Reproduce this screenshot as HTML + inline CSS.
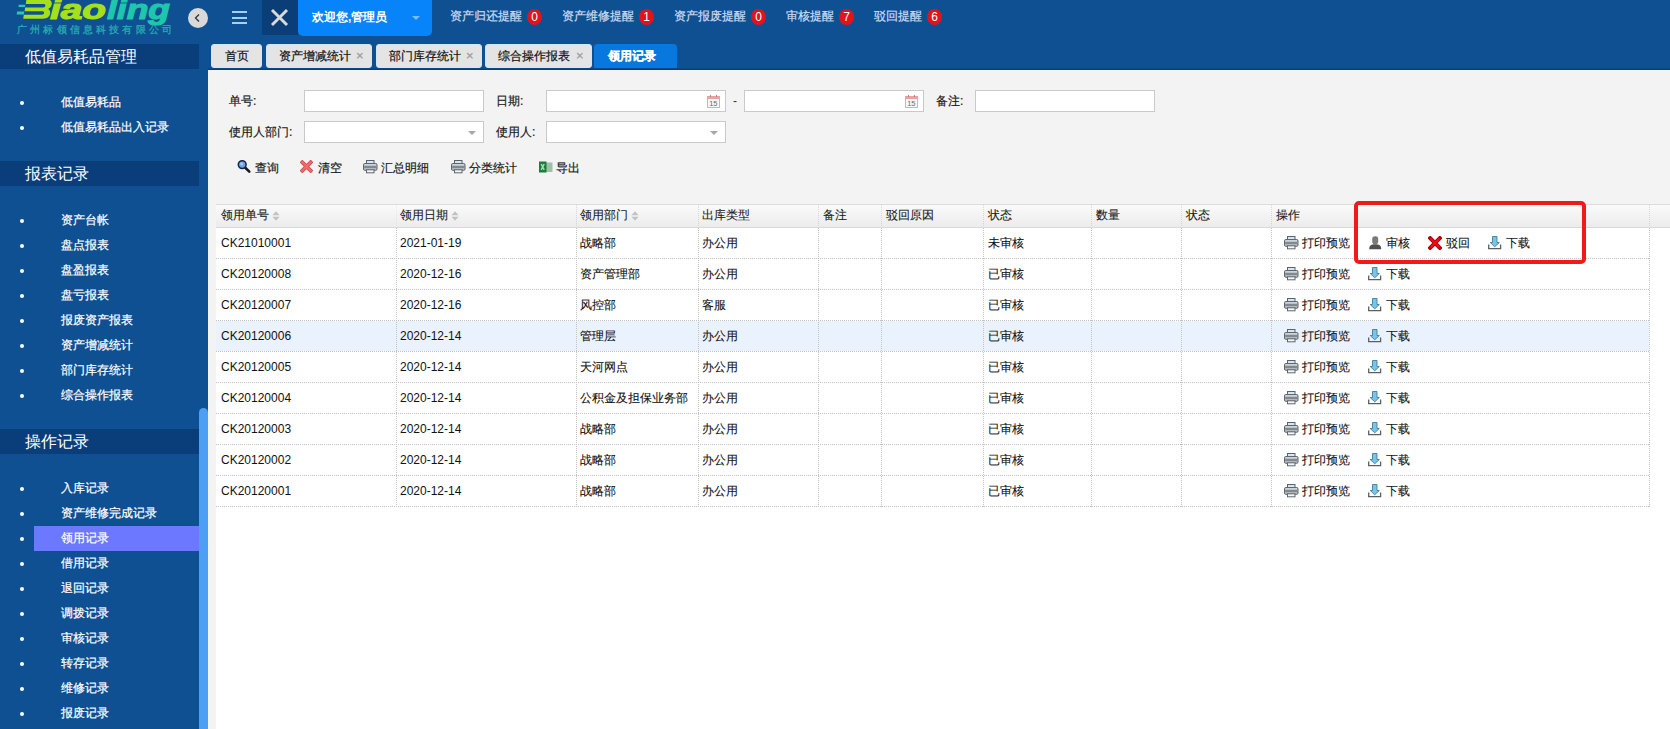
<!DOCTYPE html>
<html><head><meta charset="utf-8">
<style>
*{box-sizing:border-box;margin:0;padding:0}
html,body{width:1670px;height:729px;overflow:hidden}
body{position:relative;background:#0f5093;font-family:"Liberation Sans",sans-serif;font-size:12px;color:#222}
.a{position:absolute}
.si,.tab,.lbl,.btn,.noti{-webkit-text-stroke:0.2px currentColor}
.th,.cj{-webkit-text-stroke:0.1px currentColor}
.badge{-webkit-text-stroke:0}
/* top bar */
.logo{left:0;top:0;width:180px;height:36px}
.circ{left:188px;top:8px;width:20px;height:20px;border-radius:50%;background:#d9d9d9}
.ham{left:232px;width:15px;height:2px;background:#a9d0fb}
.xbox{left:262px;top:0;width:36px;height:35px;background:#0b3d77}
.welcome{left:298px;top:0;width:134px;height:36px;background:#0784fa;border-radius:0 0 5px 5px;color:#fff;font-weight:bold}
.noti{top:0;height:36px;line-height:32px;color:#cddcf3;white-space:nowrap}
.badge{display:inline-block;width:15px;height:16px;border-radius:50%;background:#e3121b;color:#fff;font-weight:normal;text-align:center;line-height:16px;font-size:12px;vertical-align:middle;margin-left:5px;position:relative;top:0px}
/* tabs */
.tab{top:44px;height:24px;background:#e4e4e4;border-radius:3px;color:#111;line-height:22px;white-space:nowrap;border:1px solid #d3e5fb}
.tab .cl{color:#999;font-size:13px;position:absolute;top:0}
.tab.act{background:#0878df;color:#fff;font-weight:bold;border-color:#0878df;border-radius:3px 3px 0 0}
.tline{left:208px;top:68px;width:1462px;height:2px;background:linear-gradient(#0b4888 50%,#0e3d76 50%)}
/* sidebar */
.sh{left:0;width:199px;height:25px;background:#0a3e7b;color:#fff;font-size:16px;line-height:25px;padding-left:25px}
.si{left:0;width:199px;height:25px;color:#fff;line-height:25px}
.si .dot{position:absolute;left:20px;top:11px;width:4px;height:4px;border-radius:50%;background:#fff}
.si .t{position:absolute;left:61px;top:0}
.si.act .bg{position:absolute;left:34px;top:0;width:165px;height:25px;background:#6b78ff}
.sbar{left:199px;top:408px;width:9px;height:330px;background:#4c9ff3;border-radius:5px 5px 0 0}
/* content */
.content{left:208px;top:70px;width:1462px;height:659px;background:#f3f3f3}
.white{left:216px;top:228px;width:1454px;height:501px;background:#fff}
.lbl{color:#1a1a1a;line-height:22px;height:22px}
.inp{height:22px;background:#fff;border:1px solid #c9c9c9}
.arrow{position:absolute;top:9px;width:0;height:0;border-left:4px solid transparent;border-right:4px solid transparent;border-top:4px solid #a6a6a6}
.btn{top:159px;height:18px;line-height:18px;color:#1a1a1a;white-space:nowrap}
/* table */
.thead{left:216px;top:204px;width:1454px;height:24px;background:linear-gradient(#fafafa,#ececec);border-top:1px solid #dcdcdc;border-bottom:1px solid #d8d8d8}
.th{top:204px;height:24px;line-height:23px;color:#1a1a1a;white-space:nowrap}
.vl{width:1px;background-image:linear-gradient(#c2c2c2 50%,transparent 50%);background-size:1px 2px}
.hl{height:1px;background-image:linear-gradient(90deg,#c2c2c2 50%,transparent 50%);background-size:2px 1px}
.td{height:31px;line-height:30px;color:#111;white-space:nowrap}
.hov{left:216px;width:1433px;height:30px;background:#eaf2fe}
</style></head><body>
<svg class="a logo" viewBox="0 0 180 36" width="180" height="36">
<path fill="#a6df1b" d="M26.5,-1 L46,-1 C50.5,-1 52,1.5 51.8,4 C51.6,6.2 50.2,8 48.2,9 C50,10 50.4,11.8 50.1,13.5 C49.6,16.8 47.2,18.7 43,18.7 L23.2,18.7 L23.8,14.8 L41.8,14.8 C43.2,14.8 44,14.1 44.1,13.1 C44.2,12.1 43.5,11.3 42.3,11.3 L24.6,11.3 L25.1,7.5 L43.2,7.5 C44.5,7.5 45.3,6.8 45.4,5.8 C45.5,4.8 44.8,4 43.6,4 L25.8,4 Z"/>
<path fill="#2cc6b4" d="M18.8,4.7 L25.4,4.7 L25.0,7.1 L18.4,7.1 Z M17.1,11.6 L24.3,11.6 L23.9,14.4 L16.7,14.4 Z"/>
<text x="50" y="18.7" font-family="Liberation Sans" font-weight="bold" font-style="italic" font-size="27" fill="#a6df1b" stroke="#a6df1b" stroke-width="1.1" textLength="56" lengthAdjust="spacingAndGlyphs">iao</text>
<text x="107" y="18.7" font-family="Liberation Sans" font-weight="bold" font-style="italic" font-size="27" fill="#1fc7aa" stroke="#1fc7aa" stroke-width="1.1" textLength="63" lengthAdjust="spacingAndGlyphs">ling</text>
<text x="17" y="33" font-family="Liberation Sans" font-weight="bold" font-size="10" fill="#2ab3b5" fill-opacity="0.85" textLength="155" lengthAdjust="spacing">广州标领信息科技有限公司</text>
</svg>
<div class="a circ"><svg width="20" height="20" viewBox="0 0 20 20" style="position:absolute;left:0;top:0"><path d="M11 6.5 L7.5 10 L11 13.5" fill="none" stroke="#333" stroke-width="1.3"/></svg></div>
<div class="a ham" style="top:11px"></div>
<div class="a ham" style="top:17px"></div>
<div class="a ham" style="top:22px"></div>
<div class="a xbox"><svg width="36" height="35" viewBox="0 0 36 35" style="position:absolute;left:0;top:0"><path d="M10 10 L25 25 M25 10 L10 25" stroke="#dadada" stroke-width="2.9"/></svg></div>
<div class="a welcome"><span class="a" style="left:14px;top:10px;line-height:14px">欢迎您,管理员</span><span class="a" style="left:114px;top:16px;width:0;height:0;border-left:4px solid transparent;border-right:4px solid transparent;border-top:4px solid #7dbaf5"></span></div>
<div class="a noti" style="left:450px">资产归还提醒<span class="badge">0</span></div>
<div class="a noti" style="left:562px">资产维修提醒<span class="badge">1</span></div>
<div class="a noti" style="left:674px">资产报废提醒<span class="badge">0</span></div>
<div class="a noti" style="left:786px">审核提醒<span class="badge">7</span></div>
<div class="a noti" style="left:874px">驳回提醒<span class="badge">6</span></div>
<div class="a tab" style="left:211px;width:51px;text-align:center">首页</div>
<div class="a tab" style="left:266px;width:106px"><span class="a" style="left:12px;top:0">资产增减统计</span><span class="cl" style="left:89px">×</span></div>
<div class="a tab" style="left:376px;width:106px"><span class="a" style="left:12px;top:0">部门库存统计</span><span class="cl" style="left:89px">×</span></div>
<div class="a tab" style="left:485px;width:107px"><span class="a" style="left:12px;top:0">综合操作报表</span><span class="cl" style="left:90px">×</span></div>
<div class="a tab act" style="left:594px;width:83px;padding-left:13px">领用记录</div>
<div class="a tline"></div>
<div class="a sh" style="top:44px">低值易耗品管理</div>
<div class="a si" style="top:90px"><span class="dot"></span><span class="t">低值易耗品</span></div>
<div class="a si" style="top:115px"><span class="dot"></span><span class="t">低值易耗品出入记录</span></div>
<div class="a sh" style="top:161px">报表记录</div>
<div class="a si" style="top:208px"><span class="dot"></span><span class="t">资产台帐</span></div>
<div class="a si" style="top:233px"><span class="dot"></span><span class="t">盘点报表</span></div>
<div class="a si" style="top:258px"><span class="dot"></span><span class="t">盘盈报表</span></div>
<div class="a si" style="top:283px"><span class="dot"></span><span class="t">盘亏报表</span></div>
<div class="a si" style="top:308px"><span class="dot"></span><span class="t">报废资产报表</span></div>
<div class="a si" style="top:333px"><span class="dot"></span><span class="t">资产增减统计</span></div>
<div class="a si" style="top:358px"><span class="dot"></span><span class="t">部门库存统计</span></div>
<div class="a si" style="top:383px"><span class="dot"></span><span class="t">综合操作报表</span></div>
<div class="a sh" style="top:429px">操作记录</div>
<div class="a si" style="top:476px"><span class="dot"></span><span class="t">入库记录</span></div>
<div class="a si" style="top:501px"><span class="dot"></span><span class="t">资产维修完成记录</span></div>
<div class="a si act" style="top:526px"><span class=bg></span><span class="dot"></span><span class="t">领用记录</span></div>
<div class="a si" style="top:551px"><span class="dot"></span><span class="t">借用记录</span></div>
<div class="a si" style="top:576px"><span class="dot"></span><span class="t">退回记录</span></div>
<div class="a si" style="top:601px"><span class="dot"></span><span class="t">调拨记录</span></div>
<div class="a si" style="top:626px"><span class="dot"></span><span class="t">审核记录</span></div>
<div class="a si" style="top:651px"><span class="dot"></span><span class="t">转存记录</span></div>
<div class="a si" style="top:676px"><span class="dot"></span><span class="t">维修记录</span></div>
<div class="a si" style="top:701px"><span class="dot"></span><span class="t">报废记录</span></div>
<div class="a sbar"></div>
<div class="a content"></div>
<div class="a white"></div>
<div class="a lbl" style="left:229px;top:90px">单号:</div>
<div class="a inp" style="left:304px;top:90px;width:180px"></div>
<div class="a lbl" style="left:496px;top:90px">日期:</div>
<div class="a inp" style="left:546px;top:90px;width:180px"><svg class="a" style="left:160px;top:4px" width="13" height="13" viewBox="0 0 13 13"><rect x="0.5" y="1.5" width="12" height="11" fill="#f8f8f8" stroke="#b9bcbf" stroke-width="1"/><rect x="0" y="1" width="13" height="3" fill="#e7a3a0"/><rect x="3" y="0" width="1" height="2" fill="#c77"/><rect x="9" y="0" width="1" height="2" fill="#c77"/><text x="6.3" y="11" font-family="Liberation Sans" font-size="7.5" text-anchor="middle" fill="#6a6a6a">15</text></svg></div>
<div class="a" style="left:733px;top:90px;line-height:22px;color:#333">-</div>
<div class="a inp" style="left:744px;top:90px;width:180px"><svg class="a" style="left:160px;top:4px" width="13" height="13" viewBox="0 0 13 13"><rect x="0.5" y="1.5" width="12" height="11" fill="#f8f8f8" stroke="#b9bcbf" stroke-width="1"/><rect x="0" y="1" width="13" height="3" fill="#e7a3a0"/><rect x="3" y="0" width="1" height="2" fill="#c77"/><rect x="9" y="0" width="1" height="2" fill="#c77"/><text x="6.3" y="11" font-family="Liberation Sans" font-size="7.5" text-anchor="middle" fill="#6a6a6a">15</text></svg></div>
<div class="a lbl" style="left:936px;top:90px">备注:</div>
<div class="a inp" style="left:975px;top:90px;width:180px"></div>
<div class="a lbl" style="left:229px;top:121px">使用人部门:</div>
<div class="a inp" style="left:304px;top:121px;width:180px"><span class="arrow" style="left:163px;top:9px"></span></div>
<div class="a lbl" style="left:496px;top:121px">使用人:</div>
<div class="a inp" style="left:546px;top:121px;width:180px"><span class="arrow" style="left:163px;top:9px"></span></div>
<div class="a" style="left:237px;top:159px;line-height:0"><svg width="16" height="16" viewBox="0 0 16 16"><path d="M8.3 8.8 L12.3 12.6" stroke="#1a1a1a" stroke-width="2.6" stroke-linecap="round"/><circle cx="5.2" cy="5.6" r="3.9" fill="#6fa2e2" stroke="#13254a" stroke-width="1.5"/><circle cx="4.6" cy="5" r="1.4" fill="#a9cdf5"/></svg></div>
<div class="a btn" style="left:255px">查询</div>
<div class="a" style="left:300px;top:160px;line-height:0"><svg width="13" height="13" viewBox="0 0 13 13"><path d="M2.3 2.3 L10.7 10.7 M10.7 2.3 L2.3 10.7" stroke="#cf4f4f" stroke-width="3.8" stroke-linecap="square"/><path d="M2.3 2.3 L10.7 10.7 M10.7 2.3 L2.3 10.7" stroke="#f06b6b" stroke-width="2.2" stroke-linecap="square"/></svg></div>
<div class="a btn" style="left:318px">清空</div>
<div class="a" style="left:363px;top:160px;line-height:0"><svg width="15" height="14" viewBox="0 0 15 14"><rect x="3.5" y="0.5" width="7.5" height="4" fill="#d5e6f6" stroke="#5a636b"/><rect x="0.5" y="3.5" width="13.5" height="6.8" rx="1.2" fill="#b4b9be" stroke="#5f676e"/><path d="M1.2 7 H13.3" stroke="#6c737a" stroke-width="1.4"/><path d="M1.5 4.8 H13" stroke="#e4e7ea" stroke-width="0.8"/><rect x="3.5" y="9.8" width="7.5" height="3" fill="#f4f7fa" stroke="#5f676e"/></svg></div>
<div class="a btn" style="left:381px">汇总明细</div>
<div class="a" style="left:451px;top:160px;line-height:0"><svg width="15" height="14" viewBox="0 0 15 14"><rect x="3.5" y="0.5" width="7.5" height="4" fill="#d5e6f6" stroke="#5a636b"/><rect x="0.5" y="3.5" width="13.5" height="6.8" rx="1.2" fill="#b4b9be" stroke="#5f676e"/><path d="M1.2 7 H13.3" stroke="#6c737a" stroke-width="1.4"/><path d="M1.5 4.8 H13" stroke="#e4e7ea" stroke-width="0.8"/><rect x="3.5" y="9.8" width="7.5" height="3" fill="#f4f7fa" stroke="#5f676e"/></svg></div>
<div class="a btn" style="left:469px">分类统计</div>
<div class="a" style="left:539px;top:161px;line-height:0"><svg width="15" height="13" viewBox="0 0 15 13"><rect x="7" y="1.5" width="6.5" height="9.5" fill="#9fbfa6"/><rect x="0" y="0.5" width="7.5" height="11" fill="#1f7a3e"/><path d="M2.2 3 L5.2 8.8 M5.2 3 L2.2 8.8" stroke="#9be3b0" stroke-width="1.5"/></svg></div>
<div class="a btn" style="left:556px">导出</div>
<div class="a thead"></div>
<div class="a th" style="left:221px">领用单号<svg width="8" height="10" viewBox="0 0 8 10" style="vertical-align:middle;margin-left:3px;position:relative;top:0px"><path d="M4 0.3 L7.6 4.2 L0.4 4.2Z M4 9.7 L7.6 5.8 L0.4 5.8Z" fill="#c2c2c2"/></svg></div>
<div class="a th" style="left:400px">领用日期<svg width="8" height="10" viewBox="0 0 8 10" style="vertical-align:middle;margin-left:3px;position:relative;top:0px"><path d="M4 0.3 L7.6 4.2 L0.4 4.2Z M4 9.7 L7.6 5.8 L0.4 5.8Z" fill="#c2c2c2"/></svg></div>
<div class="a th" style="left:580px">领用部门<svg width="8" height="10" viewBox="0 0 8 10" style="vertical-align:middle;margin-left:3px;position:relative;top:0px"><path d="M4 0.3 L7.6 4.2 L0.4 4.2Z M4 9.7 L7.6 5.8 L0.4 5.8Z" fill="#c2c2c2"/></svg></div>
<div class="a th" style="left:702px">出库类型</div>
<div class="a th" style="left:823px">备注</div>
<div class="a th" style="left:886px">驳回原因</div>
<div class="a th" style="left:988px">状态</div>
<div class="a th" style="left:1096px">数量</div>
<div class="a th" style="left:1186px">状态</div>
<div class="a th" style="left:1276px">操作</div>
<div class="a td" style="left:221px;top:228px">CK21010001</div>
<div class="a td" style="left:400px;top:228px">2021-01-19</div>
<div class="a td cj" style="left:580px;top:228px">战略部</div>
<div class="a td cj" style="left:702px;top:228px">办公用</div>
<div class="a td cj" style="left:988px;top:228px">未审核</div>
<div class="a" style="left:1284px;top:236px;line-height:0"><svg width="15" height="14" viewBox="0 0 15 14"><rect x="3.5" y="0.5" width="7.5" height="4" fill="#d5e6f6" stroke="#5a636b"/><rect x="0.5" y="3.5" width="13.5" height="6.8" rx="1.2" fill="#b4b9be" stroke="#5f676e"/><path d="M1.2 7 H13.3" stroke="#6c737a" stroke-width="1.4"/><path d="M1.5 4.8 H13" stroke="#e4e7ea" stroke-width="0.8"/><rect x="3.5" y="9.8" width="7.5" height="3" fill="#f4f7fa" stroke="#5f676e"/></svg></div>
<div class="a td cj" style="left:1302px;top:228px">打印预览</div>
<div class="a" style="left:1369px;top:236px;line-height:0"><svg width="13" height="14" viewBox="0 0 13 14"><rect x="3.2" y="0.3" width="6" height="7.8" rx="2.6" fill="#7a7a7a"/><path d="M0.2 13.2 C0.2 9.4 2.2 8.2 6.2 8.2 C10.2 8.2 12.2 9.4 12.2 13.2Z" fill="#4f4f4f"/></svg></div>
<div class="a td cj" style="left:1386px;top:228px">审核</div>
<div class="a" style="left:1428px;top:236px;line-height:0"><svg width="14" height="14" viewBox="0 0 14 14"><path d="M2.2 2.2 L11.8 11.8 M11.8 2.2 L2.2 11.8" stroke="#b8000a" stroke-width="4" stroke-linecap="square"/><path d="M2.5 2.5 L11.5 11.5 M11.5 2.5 L2.5 11.5" stroke="#e8101a" stroke-width="2"/></svg></div>
<div class="a td cj" style="left:1446px;top:228px">驳回</div>
<div class="a" style="left:1488px;top:236px;line-height:0"><svg width="14" height="14" viewBox="0 0 14 14"><path d="M4.5 0.5 H9 V6.5 H11.3 L6.75 10.8 L2.2 6.5 H4.5Z" fill="#79c4ea" stroke="#3d7f9c" stroke-width="0.9"/><path d="M0.7 8.6 V12.6 H12.6 V8.6" fill="none" stroke="#5a5f63" stroke-width="1.3"/></svg></div>
<div class="a td cj" style="left:1506px;top:228px">下载</div>
<div class="a hl" style="left:216px;top:258px;width:1434px"></div>
<div class="a td" style="left:221px;top:259px">CK20120008</div>
<div class="a td" style="left:400px;top:259px">2020-12-16</div>
<div class="a td cj" style="left:580px;top:259px">资产管理部</div>
<div class="a td cj" style="left:702px;top:259px">办公用</div>
<div class="a td cj" style="left:988px;top:259px">已审核</div>
<div class="a" style="left:1284px;top:267px;line-height:0"><svg width="15" height="14" viewBox="0 0 15 14"><rect x="3.5" y="0.5" width="7.5" height="4" fill="#d5e6f6" stroke="#5a636b"/><rect x="0.5" y="3.5" width="13.5" height="6.8" rx="1.2" fill="#b4b9be" stroke="#5f676e"/><path d="M1.2 7 H13.3" stroke="#6c737a" stroke-width="1.4"/><path d="M1.5 4.8 H13" stroke="#e4e7ea" stroke-width="0.8"/><rect x="3.5" y="9.8" width="7.5" height="3" fill="#f4f7fa" stroke="#5f676e"/></svg></div>
<div class="a td cj" style="left:1302px;top:259px">打印预览</div>
<div class="a" style="left:1368px;top:267px;line-height:0"><svg width="14" height="14" viewBox="0 0 14 14"><path d="M4.5 0.5 H9 V6.5 H11.3 L6.75 10.8 L2.2 6.5 H4.5Z" fill="#79c4ea" stroke="#3d7f9c" stroke-width="0.9"/><path d="M0.7 8.6 V12.6 H12.6 V8.6" fill="none" stroke="#5a5f63" stroke-width="1.3"/></svg></div>
<div class="a td cj" style="left:1386px;top:259px">下载</div>
<div class="a hl" style="left:216px;top:289px;width:1434px"></div>
<div class="a td" style="left:221px;top:290px">CK20120007</div>
<div class="a td" style="left:400px;top:290px">2020-12-16</div>
<div class="a td cj" style="left:580px;top:290px">风控部</div>
<div class="a td cj" style="left:702px;top:290px">客服</div>
<div class="a td cj" style="left:988px;top:290px">已审核</div>
<div class="a" style="left:1284px;top:298px;line-height:0"><svg width="15" height="14" viewBox="0 0 15 14"><rect x="3.5" y="0.5" width="7.5" height="4" fill="#d5e6f6" stroke="#5a636b"/><rect x="0.5" y="3.5" width="13.5" height="6.8" rx="1.2" fill="#b4b9be" stroke="#5f676e"/><path d="M1.2 7 H13.3" stroke="#6c737a" stroke-width="1.4"/><path d="M1.5 4.8 H13" stroke="#e4e7ea" stroke-width="0.8"/><rect x="3.5" y="9.8" width="7.5" height="3" fill="#f4f7fa" stroke="#5f676e"/></svg></div>
<div class="a td cj" style="left:1302px;top:290px">打印预览</div>
<div class="a" style="left:1368px;top:298px;line-height:0"><svg width="14" height="14" viewBox="0 0 14 14"><path d="M4.5 0.5 H9 V6.5 H11.3 L6.75 10.8 L2.2 6.5 H4.5Z" fill="#79c4ea" stroke="#3d7f9c" stroke-width="0.9"/><path d="M0.7 8.6 V12.6 H12.6 V8.6" fill="none" stroke="#5a5f63" stroke-width="1.3"/></svg></div>
<div class="a td cj" style="left:1386px;top:290px">下载</div>
<div class="a hl" style="left:216px;top:320px;width:1434px"></div>
<div class="a hov" style="top:321px"></div>
<div class="a td" style="left:221px;top:321px">CK20120006</div>
<div class="a td" style="left:400px;top:321px">2020-12-14</div>
<div class="a td cj" style="left:580px;top:321px">管理层</div>
<div class="a td cj" style="left:702px;top:321px">办公用</div>
<div class="a td cj" style="left:988px;top:321px">已审核</div>
<div class="a" style="left:1284px;top:329px;line-height:0"><svg width="15" height="14" viewBox="0 0 15 14"><rect x="3.5" y="0.5" width="7.5" height="4" fill="#d5e6f6" stroke="#5a636b"/><rect x="0.5" y="3.5" width="13.5" height="6.8" rx="1.2" fill="#b4b9be" stroke="#5f676e"/><path d="M1.2 7 H13.3" stroke="#6c737a" stroke-width="1.4"/><path d="M1.5 4.8 H13" stroke="#e4e7ea" stroke-width="0.8"/><rect x="3.5" y="9.8" width="7.5" height="3" fill="#f4f7fa" stroke="#5f676e"/></svg></div>
<div class="a td cj" style="left:1302px;top:321px">打印预览</div>
<div class="a" style="left:1368px;top:329px;line-height:0"><svg width="14" height="14" viewBox="0 0 14 14"><path d="M4.5 0.5 H9 V6.5 H11.3 L6.75 10.8 L2.2 6.5 H4.5Z" fill="#79c4ea" stroke="#3d7f9c" stroke-width="0.9"/><path d="M0.7 8.6 V12.6 H12.6 V8.6" fill="none" stroke="#5a5f63" stroke-width="1.3"/></svg></div>
<div class="a td cj" style="left:1386px;top:321px">下载</div>
<div class="a hl" style="left:216px;top:351px;width:1434px"></div>
<div class="a td" style="left:221px;top:352px">CK20120005</div>
<div class="a td" style="left:400px;top:352px">2020-12-14</div>
<div class="a td cj" style="left:580px;top:352px">天河网点</div>
<div class="a td cj" style="left:702px;top:352px">办公用</div>
<div class="a td cj" style="left:988px;top:352px">已审核</div>
<div class="a" style="left:1284px;top:360px;line-height:0"><svg width="15" height="14" viewBox="0 0 15 14"><rect x="3.5" y="0.5" width="7.5" height="4" fill="#d5e6f6" stroke="#5a636b"/><rect x="0.5" y="3.5" width="13.5" height="6.8" rx="1.2" fill="#b4b9be" stroke="#5f676e"/><path d="M1.2 7 H13.3" stroke="#6c737a" stroke-width="1.4"/><path d="M1.5 4.8 H13" stroke="#e4e7ea" stroke-width="0.8"/><rect x="3.5" y="9.8" width="7.5" height="3" fill="#f4f7fa" stroke="#5f676e"/></svg></div>
<div class="a td cj" style="left:1302px;top:352px">打印预览</div>
<div class="a" style="left:1368px;top:360px;line-height:0"><svg width="14" height="14" viewBox="0 0 14 14"><path d="M4.5 0.5 H9 V6.5 H11.3 L6.75 10.8 L2.2 6.5 H4.5Z" fill="#79c4ea" stroke="#3d7f9c" stroke-width="0.9"/><path d="M0.7 8.6 V12.6 H12.6 V8.6" fill="none" stroke="#5a5f63" stroke-width="1.3"/></svg></div>
<div class="a td cj" style="left:1386px;top:352px">下载</div>
<div class="a hl" style="left:216px;top:382px;width:1434px"></div>
<div class="a td" style="left:221px;top:383px">CK20120004</div>
<div class="a td" style="left:400px;top:383px">2020-12-14</div>
<div class="a td cj" style="left:580px;top:383px">公积金及担保业务部</div>
<div class="a td cj" style="left:702px;top:383px">办公用</div>
<div class="a td cj" style="left:988px;top:383px">已审核</div>
<div class="a" style="left:1284px;top:391px;line-height:0"><svg width="15" height="14" viewBox="0 0 15 14"><rect x="3.5" y="0.5" width="7.5" height="4" fill="#d5e6f6" stroke="#5a636b"/><rect x="0.5" y="3.5" width="13.5" height="6.8" rx="1.2" fill="#b4b9be" stroke="#5f676e"/><path d="M1.2 7 H13.3" stroke="#6c737a" stroke-width="1.4"/><path d="M1.5 4.8 H13" stroke="#e4e7ea" stroke-width="0.8"/><rect x="3.5" y="9.8" width="7.5" height="3" fill="#f4f7fa" stroke="#5f676e"/></svg></div>
<div class="a td cj" style="left:1302px;top:383px">打印预览</div>
<div class="a" style="left:1368px;top:391px;line-height:0"><svg width="14" height="14" viewBox="0 0 14 14"><path d="M4.5 0.5 H9 V6.5 H11.3 L6.75 10.8 L2.2 6.5 H4.5Z" fill="#79c4ea" stroke="#3d7f9c" stroke-width="0.9"/><path d="M0.7 8.6 V12.6 H12.6 V8.6" fill="none" stroke="#5a5f63" stroke-width="1.3"/></svg></div>
<div class="a td cj" style="left:1386px;top:383px">下载</div>
<div class="a hl" style="left:216px;top:413px;width:1434px"></div>
<div class="a td" style="left:221px;top:414px">CK20120003</div>
<div class="a td" style="left:400px;top:414px">2020-12-14</div>
<div class="a td cj" style="left:580px;top:414px">战略部</div>
<div class="a td cj" style="left:702px;top:414px">办公用</div>
<div class="a td cj" style="left:988px;top:414px">已审核</div>
<div class="a" style="left:1284px;top:422px;line-height:0"><svg width="15" height="14" viewBox="0 0 15 14"><rect x="3.5" y="0.5" width="7.5" height="4" fill="#d5e6f6" stroke="#5a636b"/><rect x="0.5" y="3.5" width="13.5" height="6.8" rx="1.2" fill="#b4b9be" stroke="#5f676e"/><path d="M1.2 7 H13.3" stroke="#6c737a" stroke-width="1.4"/><path d="M1.5 4.8 H13" stroke="#e4e7ea" stroke-width="0.8"/><rect x="3.5" y="9.8" width="7.5" height="3" fill="#f4f7fa" stroke="#5f676e"/></svg></div>
<div class="a td cj" style="left:1302px;top:414px">打印预览</div>
<div class="a" style="left:1368px;top:422px;line-height:0"><svg width="14" height="14" viewBox="0 0 14 14"><path d="M4.5 0.5 H9 V6.5 H11.3 L6.75 10.8 L2.2 6.5 H4.5Z" fill="#79c4ea" stroke="#3d7f9c" stroke-width="0.9"/><path d="M0.7 8.6 V12.6 H12.6 V8.6" fill="none" stroke="#5a5f63" stroke-width="1.3"/></svg></div>
<div class="a td cj" style="left:1386px;top:414px">下载</div>
<div class="a hl" style="left:216px;top:444px;width:1434px"></div>
<div class="a td" style="left:221px;top:445px">CK20120002</div>
<div class="a td" style="left:400px;top:445px">2020-12-14</div>
<div class="a td cj" style="left:580px;top:445px">战略部</div>
<div class="a td cj" style="left:702px;top:445px">办公用</div>
<div class="a td cj" style="left:988px;top:445px">已审核</div>
<div class="a" style="left:1284px;top:453px;line-height:0"><svg width="15" height="14" viewBox="0 0 15 14"><rect x="3.5" y="0.5" width="7.5" height="4" fill="#d5e6f6" stroke="#5a636b"/><rect x="0.5" y="3.5" width="13.5" height="6.8" rx="1.2" fill="#b4b9be" stroke="#5f676e"/><path d="M1.2 7 H13.3" stroke="#6c737a" stroke-width="1.4"/><path d="M1.5 4.8 H13" stroke="#e4e7ea" stroke-width="0.8"/><rect x="3.5" y="9.8" width="7.5" height="3" fill="#f4f7fa" stroke="#5f676e"/></svg></div>
<div class="a td cj" style="left:1302px;top:445px">打印预览</div>
<div class="a" style="left:1368px;top:453px;line-height:0"><svg width="14" height="14" viewBox="0 0 14 14"><path d="M4.5 0.5 H9 V6.5 H11.3 L6.75 10.8 L2.2 6.5 H4.5Z" fill="#79c4ea" stroke="#3d7f9c" stroke-width="0.9"/><path d="M0.7 8.6 V12.6 H12.6 V8.6" fill="none" stroke="#5a5f63" stroke-width="1.3"/></svg></div>
<div class="a td cj" style="left:1386px;top:445px">下载</div>
<div class="a hl" style="left:216px;top:475px;width:1434px"></div>
<div class="a td" style="left:221px;top:476px">CK20120001</div>
<div class="a td" style="left:400px;top:476px">2020-12-14</div>
<div class="a td cj" style="left:580px;top:476px">战略部</div>
<div class="a td cj" style="left:702px;top:476px">办公用</div>
<div class="a td cj" style="left:988px;top:476px">已审核</div>
<div class="a" style="left:1284px;top:484px;line-height:0"><svg width="15" height="14" viewBox="0 0 15 14"><rect x="3.5" y="0.5" width="7.5" height="4" fill="#d5e6f6" stroke="#5a636b"/><rect x="0.5" y="3.5" width="13.5" height="6.8" rx="1.2" fill="#b4b9be" stroke="#5f676e"/><path d="M1.2 7 H13.3" stroke="#6c737a" stroke-width="1.4"/><path d="M1.5 4.8 H13" stroke="#e4e7ea" stroke-width="0.8"/><rect x="3.5" y="9.8" width="7.5" height="3" fill="#f4f7fa" stroke="#5f676e"/></svg></div>
<div class="a td cj" style="left:1302px;top:476px">打印预览</div>
<div class="a" style="left:1368px;top:484px;line-height:0"><svg width="14" height="14" viewBox="0 0 14 14"><path d="M4.5 0.5 H9 V6.5 H11.3 L6.75 10.8 L2.2 6.5 H4.5Z" fill="#79c4ea" stroke="#3d7f9c" stroke-width="0.9"/><path d="M0.7 8.6 V12.6 H12.6 V8.6" fill="none" stroke="#5a5f63" stroke-width="1.3"/></svg></div>
<div class="a td cj" style="left:1386px;top:476px">下载</div>
<div class="a hl" style="left:216px;top:506px;width:1434px"></div>
<div class="a vl" style="left:396px;top:205px;height:22px;opacity:0.25"></div>
<div class="a vl" style="left:396px;top:228px;height:279px"></div>
<div class="a vl" style="left:576px;top:205px;height:22px;opacity:0.6"></div>
<div class="a vl" style="left:576px;top:228px;height:279px"></div>
<div class="a vl" style="left:698px;top:205px;height:22px;opacity:0.6"></div>
<div class="a vl" style="left:698px;top:228px;height:279px"></div>
<div class="a vl" style="left:818px;top:205px;height:22px;opacity:0.6"></div>
<div class="a vl" style="left:818px;top:228px;height:279px"></div>
<div class="a vl" style="left:881px;top:205px;height:22px;opacity:0.6"></div>
<div class="a vl" style="left:881px;top:228px;height:279px"></div>
<div class="a vl" style="left:983px;top:205px;height:22px;opacity:0.6"></div>
<div class="a vl" style="left:983px;top:228px;height:279px"></div>
<div class="a vl" style="left:1091px;top:205px;height:22px;opacity:0.6"></div>
<div class="a vl" style="left:1091px;top:228px;height:279px"></div>
<div class="a vl" style="left:1181px;top:205px;height:22px;opacity:0.6"></div>
<div class="a vl" style="left:1181px;top:228px;height:279px"></div>
<div class="a vl" style="left:1271px;top:205px;height:22px;opacity:0.6"></div>
<div class="a vl" style="left:1271px;top:228px;height:279px"></div>
<div class="a vl" style="left:1649px;top:205px;height:22px;opacity:0.6"></div>
<div class="a vl" style="left:1649px;top:228px;height:279px"></div>
<div class="a" style="left:1354px;top:201px;width:232px;height:63px;border:4px solid #f01a1a;border-radius:5px"></div>
</body></html>
